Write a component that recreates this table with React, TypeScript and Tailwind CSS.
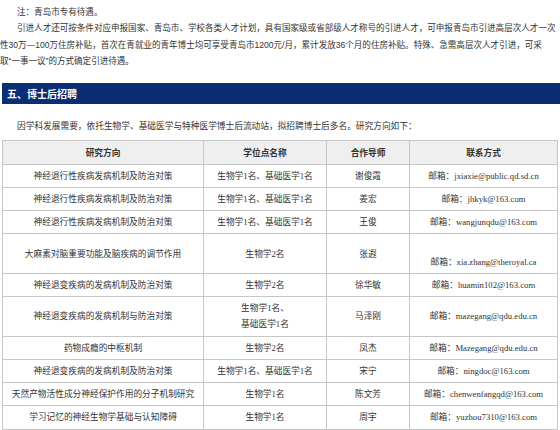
import React from 'react'

/* ── Rows of the postdoc table ── */
type Row = { topic: string; degree: React.ReactNode; tutor: string; contact: React.ReactNode }

const ROWS: Row[] = [
  { topic: '神经退行性疾病发病机制及防治对策', degree: '生物学1名、基础医学1名', tutor: '谢俊霞', contact: '邮箱：jxiaxie@public.qd.sd.cn' },
  { topic: '神经退行性疾病发病机制及防治对策', degree: '生物学1名、基础医学1名', tutor: '姜宏', contact: '邮箱：jhkyk@163.com' },
  { topic: '神经退行性疾病发病机制及防治对策', degree: '生物学1名、基础医学1名', tutor: '王俊', contact: '邮箱：wangjunqdu@163.com' },
  { topic: '大麻素对脑重要功能及脑疾病的调节作用', degree: '生物学2名', tutor: '张遐', contact: <><br />邮箱：xia.zhang@theroyal.ca</> },
  { topic: '神经退变疾病的发病机制及防治对策', degree: '生物学2名', tutor: '徐华敏', contact: '邮箱：huamin102@163.com' },
  { topic: '神经退变疾病的发病机制与防治对策', degree: <>生物学1名、<br />基础医学1名</>, tutor: '马泽刚', contact: '邮箱：mazegang@qdu.edu.cn' },
  { topic: '药物成瘾的中枢机制', degree: '生物学2名', tutor: '凤杰', contact: '邮箱：Mazegang@qdu.edu.cn' },
  { topic: '神经退变疾病的发病机制及防治对策', degree: '生物学1名、基础医学1名', tutor: '宋宁', contact: '邮箱：ningdoc@163.com' },
  { topic: '天然产物活性成分神经保护作用的分子机制研究', degree: '生物学1名', tutor: '陈文芳', contact: '邮箱：chenwenfangqd@163.com' },
  { topic: '学习记忆的神经生物学基础与认知障碍', degree: '生物学1名', tutor: '周宇', contact: '邮箱：yuzhou7310@163.com' },
]

const HEADERS = ['研究方向', '学位点名称', '合作导师', '联系方式']

export default function App() {
  return (
    <div className="w-[560px] h-[430px] overflow-hidden bg-white text-[#333] text-[8.7px]"
      style={{ fontFamily: '"Liberation Sans", "Noto Sans CJK SC", sans-serif' }}>
      {/* Intro text */}
      <div className="pt-[4px] leading-[16.4px] whitespace-nowrap text-[8.55px]">
        <p className="pl-[17px]">注：青岛市专有待遇。</p>
        <p className="indent-[17px]">
          引进人才还可按条件对应申报国家、青岛市、学校各类人才计划，具有国家级或省部级人才称号的引进人才，可申报青岛市引进高层次人才一次<br />
          性30万—100万住房补贴，首次在青就业的青年博士均可享受青岛市1200元/月，累计发放36个月的住房补贴。特殊、急需高层次人才引进，可采<br />
          取“一事一议”的方式确定引进待遇。
        </p>
      </div>

      {/* Section bar */}
      <div className="ml-[2px] mt-[13px] h-[21px] flex items-center pl-[5px] bg-[#0b2d73] text-white text-[10px] font-bold"
        style={{ fontFamily: '"Noto Sans CJK SC", sans-serif' }}>
        五、博士后招聘
      </div>

      <p className="mt-[14px] pl-[17px] leading-[16px] whitespace-nowrap">
        因学科发展需要，依托生物学、基础医学与特种医学博士后流动站，拟招聘博士后多名。研究方向如下：
      </p>

      {/* Table */}
      <table className="ml-[2px] mt-[6px] w-[555px] table-fixed border-collapse"
        style={{ fontFamily: '"Liberation Serif", "Noto Sans CJK SC", serif' }}>
        <colgroup>
          <col className="w-[201px]" />
          <col className="w-[123px]" />
          <col className="w-[83px]" />
          <col className="w-[148px]" />
        </colgroup>
        <thead>
          <tr className="bg-[#efefef]">
            {HEADERS.map(h => (
              <th key={h} className="border border-[#c6c6c6] py-[4px] leading-[15px] font-semibold text-[#333] text-center"
                style={{ fontFamily: '"Noto Sans CJK SC", sans-serif' }}>
                {h}
              </th>
            ))}
          </tr>
        </thead>
        <tbody>
          {ROWS.map((r, i) => (
            <tr key={i}>
              <td className="border border-[#c6c6c6] py-[3px] leading-[16.25px] text-center whitespace-nowrap">{r.topic}</td>
              <td className="border border-[#c6c6c6] py-[3px] leading-[16.25px] text-center whitespace-nowrap">{r.degree}</td>
              <td className="border border-[#c6c6c6] py-[3px] leading-[16.25px] text-center whitespace-nowrap">{r.tutor}</td>
              <td className="border border-[#c6c6c6] py-[3px] leading-[16.25px] text-center whitespace-nowrap">{r.contact}</td>
            </tr>
          ))}
        </tbody>
      </table>
    </div>
  )
}
